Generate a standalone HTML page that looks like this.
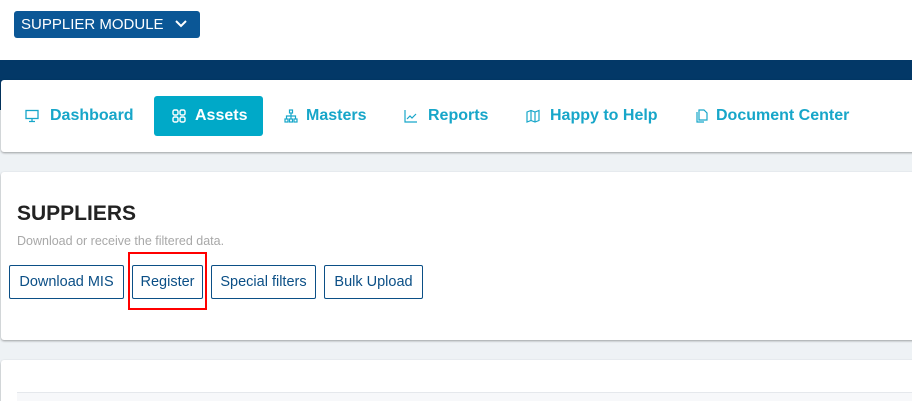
<!DOCTYPE html>
<html><head><style>
*{margin:0;padding:0;box-sizing:border-box}
html,body{width:912px;height:401px;overflow:hidden}
body{background:#eef2f5;font-family:"Liberation Sans",sans-serif;position:relative}
.top{position:absolute;left:0;top:0;width:912px;height:60px;background:#fff}
.mod{position:absolute;left:14px;top:11px;width:186px;height:27px;background:#0b5796;border-radius:3px;color:#fff;font-size:15px;line-height:27px;padding-left:7px}
.mod svg{position:absolute;left:161px;top:9px}
.band{position:absolute;left:0;top:60px;width:912px;height:50px;background:#033867}
.card{position:absolute;left:1px;background:#fff;border-radius:3px;box-shadow:0 1px 2px rgba(0,0,0,.35)}
.nav{top:80px;width:920px;height:72px}
.ni{position:absolute;top:16px;height:40px;line-height:40px;font-weight:bold;font-size:16px;color:#17a6c9;white-space:nowrap}
.ni svg{position:absolute;top:13px}
.act{background:#00a9c8;color:#fff;border-radius:3px}
h1{position:absolute;left:17px;top:202px;font-size:21px;font-weight:bold;color:#222;font-family:"Liberation Sans",sans-serif}
.sub{position:absolute;left:17px;top:234px;font-size:12.5px;color:#a8a8a8}
.b{position:absolute;top:265px;height:34px;border:1px solid #0b4f86;border-radius:2px;color:#0b4f86;font-size:14.5px;line-height:33px;text-align:center;background:#fff;white-space:nowrap}
</style></head><body>
<div class="top"></div>
<div class="mod">SUPPLIER MODULE<svg width="12" height="8" viewBox="0 0 12 8"><path d="M1 1l5 5 5-5" stroke="#fff" stroke-width="2" fill="none"/></svg></div>
<div class="band"></div>
<div class="card nav">
 <div class="ni" style="left:24px"><svg width="14" height="14" viewBox="0 0 14 14" style="left:0"><rect x="1" y="1.5" width="12" height="8" fill="none" stroke="#17a6c9" stroke-width="1.3"/><path d="M7 9.5v3M4 12.5h6" stroke="#17a6c9" stroke-width="1.3"/></svg><span style="margin-left:25px">Dashboard</span></div>
 <div class="ni act" style="left:153px;width:109px"><svg width="14" height="14" viewBox="0 0 14 14" style="left:18px"><g fill="none" stroke="#fff" stroke-width="1.4"><rect x="1" y="1" width="5" height="5" rx="1.5"/><rect x="8" y="1" width="5" height="5" rx="1.5"/><rect x="1" y="8" width="5" height="5" rx="1.5"/><rect x="8" y="8" width="5" height="5" rx="1.5"/></g></svg><span style="margin-left:41px">Assets</span></div>
 <div class="ni" style="left:283px"><svg width="14" height="14" viewBox="0 0 14 14" style="left:0"><g fill="none" stroke="#17a6c9" stroke-width="1.2"><rect x="5.5" y="1" width="3" height="3"/><rect x="1" y="10" width="3" height="3"/><rect x="5.5" y="10" width="3" height="3"/><rect x="10" y="10" width="3" height="3"/><path d="M7 4v6M2.5 10V7h9v3"/></g></svg><span style="margin-left:22px">Masters</span></div>
 <div class="ni" style="left:403px"><svg width="14" height="14" viewBox="0 0 14 14" style="left:0"><path d="M1 1v12h12M3 10l3-3 2 2 4-4" fill="none" stroke="#17a6c9" stroke-width="1.2"/></svg><span style="margin-left:24px">Reports</span></div>
 <div class="ni" style="left:525px"><svg width="14" height="14" viewBox="0 0 14 14" style="left:0"><path d="M1 3l4-1.5 4 1.5 4-1.5v10l-4 1.5-4-1.5-4 1.5zM5 1.5v10M9 3v10" fill="none" stroke="#17a6c9" stroke-width="1.2"/></svg><span style="margin-left:24px">Happy to Help</span></div>
 <div class="ni" style="left:695px"><svg width="12" height="14" viewBox="0 0 12 14" style="left:0"><path d="M1 3v10h7M3 1h5l3 3v7H3z" fill="none" stroke="#17a6c9" stroke-width="1.2"/></svg><span style="margin-left:20px">Document Center</span></div>
</div>
<div class="card" style="top:172px;width:920px;height:168px"></div>
<h1>SUPPLIERS</h1>
<div class="sub">Download or receive the filtered data.</div>
<div class="b" style="left:9px;width:115px">Download MIS</div>
<div class="b" style="left:132px;width:71px">Register</div>
<div class="b" style="left:211px;width:105px">Special filters</div>
<div class="b" style="left:324px;width:99px">Bulk Upload</div>
<div style="position:absolute;left:128px;top:252px;width:79px;height:58px;border:2px solid #f00"></div>
<div class="card" style="top:360px;width:920px;height:60px"></div>
<div style="position:absolute;left:17px;top:392px;width:900px;height:10px;background:#f7f8fa;border-top:1px solid #e5e8ec"></div>
</body></html>
